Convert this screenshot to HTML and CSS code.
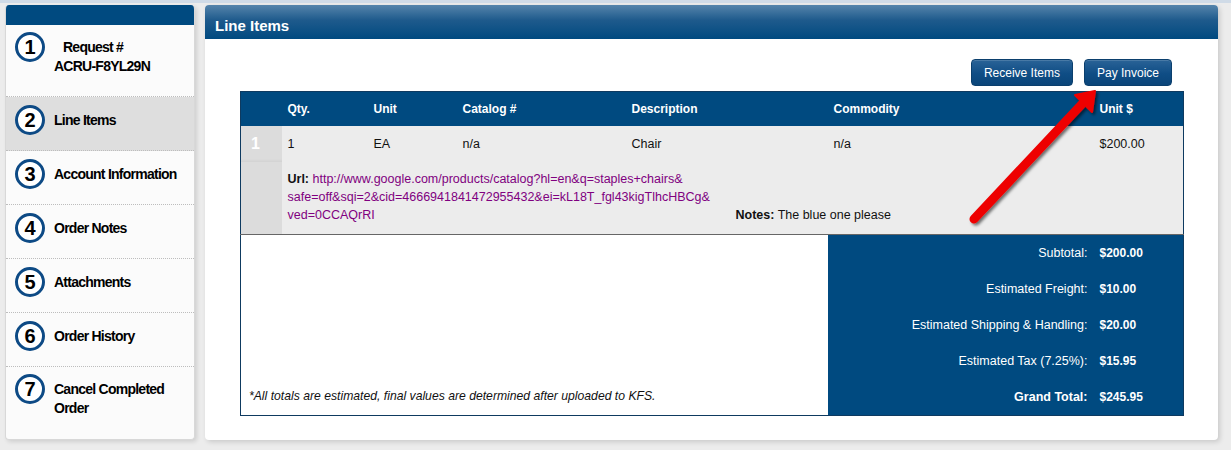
FILE: index.html
```html
<!DOCTYPE html>
<html>
<head>
<meta charset="utf-8">
<link rel="stylesheet" href="styles.css">
</head>
<body>
<div class="page">
  <aside class="sidebar">
    <div class="side-head"></div>
    <ul class="steps">
      <li class="step step-tall"><span class="num">1</span><span class="label label-req">Request #<br>ACRU-F8YL29N</span></li>
      <li class="step active"><span class="num">2</span><span class="label">Line Items</span></li>
      <li class="step"><span class="num">3</span><span class="label">Account Information</span></li>
      <li class="step"><span class="num">4</span><span class="label">Order Notes</span></li>
      <li class="step"><span class="num">5</span><span class="label">Attachments</span></li>
      <li class="step"><span class="num">6</span><span class="label">Order History</span></li>
      <li class="step step-tall last"><span class="num">7</span><span class="label">Cancel Completed<br>Order</span></li>
    </ul>
  </aside>
  <main class="panel">
    <div class="panel-head">Line Items</div>
    <div class="panel-body">
      <div class="actions">
        <button class="btn">Receive Items</button>
        <button class="btn">Pay Invoice</button>
      </div>
      <table class="items">
        <colgroup>
          <col class="c-num"><col class="c-qty"><col class="c-unit"><col class="c-cat"><col class="c-desc"><col class="c-comm"><col class="c-price">
        </colgroup>
        <thead>
          <tr><th></th><th>Qty.</th><th>Unit</th><th>Catalog #</th><th>Description</th><th>Commodity</th><th>Unit $</th></tr>
        </thead>
        <tbody>
          <tr class="row-main">
            <td class="idx idx-top">1</td><td>1</td><td>EA</td><td>n/a</td><td>Chair</td><td>n/a</td><td>$200.00</td>
          </tr>
          <tr class="row-extra">
            <td class="idx"></td>
            <td colspan="6">
              <div class="extra">
                <div class="url"><b>Url:</b> <a href="#">http://www.google.com/products/catalog?hl=en&amp;q=staples+chairs&amp;<br>safe=off&amp;sqi=2&amp;cid=4666941841472955432&amp;ei=kL18T_fgl43kigTlhcHBCg&amp;<br>ved=0CCAQrRI</a></div>
                <div class="notes"><b>Notes:</b> The blue one please</div>
              </div>
            </td>
          </tr>
          <tr class="tot">
            <td class="foot" colspan="5" rowspan="5"><i>*All totals are estimated, final values are determined after uploaded to KFS.</i></td>
            <td class="tl">Subtotal:</td><td class="tv">$200.00</td>
          </tr>
          <tr class="tot"><td class="tl">Estimated Freight:</td><td class="tv">$10.00</td></tr>
          <tr class="tot"><td class="tl">Estimated Shipping &amp; Handling:</td><td class="tv">$20.00</td></tr>
          <tr class="tot"><td class="tl">Estimated Tax (7.25%):</td><td class="tv">$15.95</td></tr>
          <tr class="tot"><td class="tl"><b>Grand Total:</b></td><td class="tv">$245.95</td></tr>
        </tbody>
      </table>
    </div>
  </main>
</div>
<svg class="arrow" width="150" height="150" viewBox="0 0 150 150">
  <defs>
    <filter id="sh" x="-20%" y="-20%" width="140%" height="140%">
      <feDropShadow dx="2" dy="2" stdDeviation="1.5" flood-color="#000" flood-opacity="0.55"/>
    </filter>
  </defs>
  <g filter="url(#sh)">
    <line x1="14" y1="137" x2="122" y2="22" stroke="#ee0000" stroke-width="9" stroke-linecap="round"/>
    <polygon points="135,9 115,13 132,30" fill="#ee0000" stroke="#ee0000" stroke-width="2" stroke-linejoin="round"/>
  </g>
</svg>
</body>
</html>
```
FILE: styles.css
```css
html, body { margin: 0; padding: 0; }
body {
  background: #ececec;
  border-top: 3px solid #d0dbe7;
  font-family: "Liberation Sans", Arial, sans-serif;
  color: #111;
  position: relative;
  height: 447px;
  overflow: hidden;
}
.page {
  display: flex;
  align-items: flex-start;
  gap: 10px;
  padding: 2px 13px 0 5px;
}
.sidebar {
  width: 190px;
  box-sizing: border-box;
  background: #fbfbfb;
  border: 1px solid #d8d8d8;
  border-top: none;
  border-radius: 4px;
  box-shadow: 2px 2px 4px rgba(0,0,0,0.12);
  overflow: hidden;
}
.side-head {
  height: 20px;
  background: #004a80;
}
.steps { list-style: none; margin: 0; padding: 0; }
.step {
  display: flex;
  align-items: flex-start;
  gap: 9px;
  height: 54px;
  box-sizing: border-box;
  padding: 8px 0 0 9px;
  border-bottom: 1px dotted #bdbdbd;
}
.step-tall { height: 72px; padding-top: 7px; }
.step.last { border-bottom: none; }
.step.active { background: #dedede; }
.num {
  flex: none;
  width: 30px;
  height: 30px;
  box-sizing: border-box;
  border: 3px solid #0d4a85;
  border-radius: 50%;
  background: #fff;
  display: flex;
  align-items: center;
  justify-content: center;
  font-size: 20px;
  font-weight: bold;
  color: #000;
}
.label {
  margin-top: 6px;
  font-size: 14px;
  font-weight: bold;
  letter-spacing: -0.75px;
  line-height: 19px;
  color: #000;
}
.label-req { text-indent: 9px; display: block; }
.panel {
  width: 1013px;
  height: 435px;
  background: #fff;
  border-radius: 4px;
  box-shadow: 2px 2px 5px rgba(0,0,0,0.15);
  overflow: hidden;
}
.panel-head {
  height: 34px;
  box-sizing: border-box;
  padding: 12px 10px 0;
  font-size: 15px;
  line-height: 18px;
  font-weight: bold;
  color: #fff;
  background: linear-gradient(#5584ab 0%, #1e5a8c 45%, #004a80 100%);
}
.panel-body { padding: 20px 35px 0; }
.actions {
  display: flex;
  justify-content: flex-end;
  gap: 11px;
  padding-right: 11px;
  margin-bottom: 5px;
}
.btn {
  height: 27px;
  padding: 0 12px;
  border: 1px solid #0b3f6d;
  border-radius: 4px;
  background: linear-gradient(#2a6397 0%, #0f4d85 55%, #0a4579 100%);
  box-shadow: inset 0 1px 0 rgba(255,255,255,0.15);
  color: #fff;
  font-family: "Liberation Sans", Arial, sans-serif;
  font-size: 12px;
}
.items {
  width: 943px;
  border-collapse: collapse;
  table-layout: fixed;
  border: 1px solid #0e3a60;
  font-size: 12.5px;
}
.c-num { width: 41px; }
.c-qty { width: 86px; }
.c-unit { width: 89px; }
.c-cat { width: 169px; }
.c-desc { width: 202px; }
.c-comm { width: 266px; }
.c-price { width: 90px; }
.items th {
  height: 34px;
  padding: 0 6px;
  background: #004a80;
  color: #fff;
  font-size: 12px;
  font-weight: bold;
  text-align: left;
}
.items td { padding: 0 6px; }
.row-main td {
  height: 36px;
  background: #ececec;
  color: #111;
}
.row-extra td {
  background: #ececec;
  padding-top: 8px;
  padding-bottom: 10px;
  border-bottom: 1px solid #666;
}
.items td.idx {
  background: #dcdcdc;
  color: #fff;
  font-weight: bold;
  font-size: 16px;
  padding-left: 10px;
  vertical-align: middle;
}
.items td.idx-top { box-shadow: inset 0 -3px 3px -2px rgba(0,0,0,0.06); }
.extra {
  display: flex;
  align-items: flex-end;
  line-height: 18px;
}
.url { width: 448px; flex: none; }
.url a { color: #800080; text-decoration: none; }
.notes { color: #111; }
.tot td { height: 36px; }
.items td.foot {
  background: #fff;
  vertical-align: bottom;
  padding: 0 8px 12px;
  font-size: 12.2px;
  color: #111;
}
.items td.tl {
  background: #004a80;
  color: #fff;
  font-size: 12.5px;
  text-align: right;
  padding-right: 6px;
}
.items td.tv {
  background: #004a80;
  color: #fff;
  font-size: 12px;
  font-weight: bold;
  padding-left: 6px;
}
.arrow {
  position: absolute;
  left: 960px;
  top: 79px;
}
```
